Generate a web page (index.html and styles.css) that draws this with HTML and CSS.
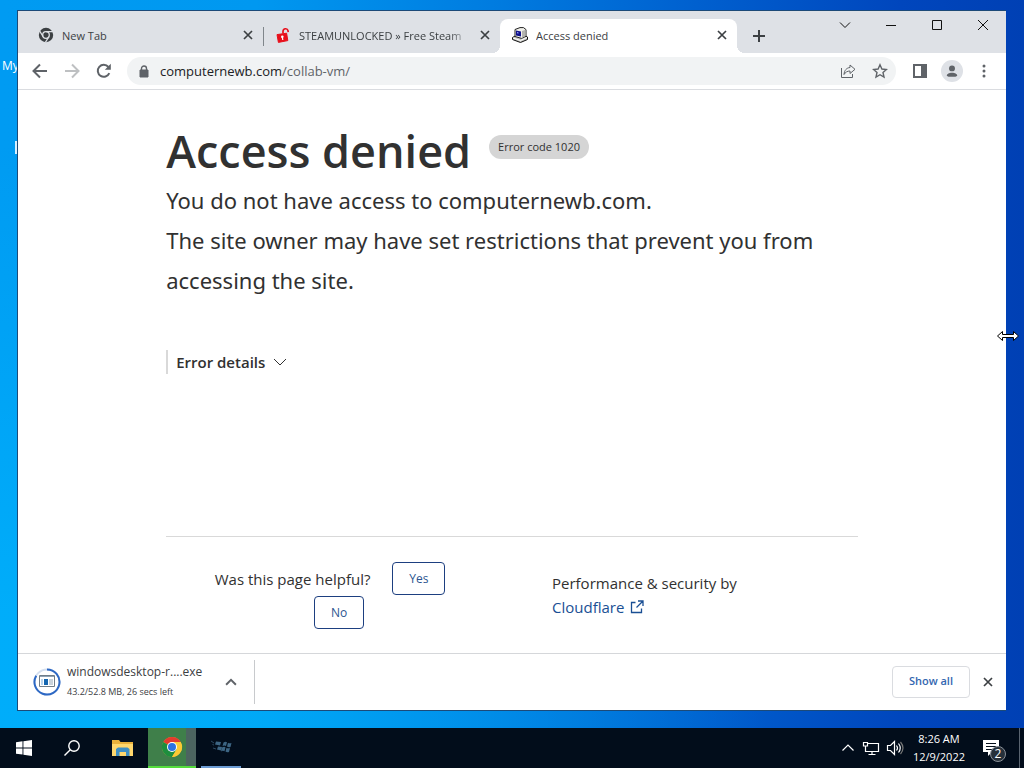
FILE: index.html
```html
<!DOCTYPE html>
<html lang="en">
<head>
    <meta charset="UTF-8">
    <meta name="viewport" content="width=device-width, initial-scale=1.0">
    <title>Access denied</title>
    <link rel="stylesheet" href="styles.css">
</head>
<body>
    <div class="desktop">
        <span class="shortcut">My</span>
        <span class="shortcut-edge"></span>

        <div class="window">
            <div class="tabstrip">
                <div class="tab">
                    <svg class="favicon" viewBox="0 0 16 16">
                        <circle cx="8" cy="8" r="7.2" fill="#3c4043"/>
                        <circle cx="8" cy="8" r="3.3" fill="none" stroke="#dee1e6" stroke-width="1.3"/>
                        <path d="M8 4.7h7M5.1 9.6L1.6 3.9M10.9 9.6L7.4 15.4" stroke="#dee1e6" stroke-width="1.2"/>
                    </svg>
                    <span class="title">New Tab</span>
                    <button class="close" aria-label="Close tab"><svg viewBox="0 0 10 10"><path d="M1 1l8 8M9 1L1 9"/></svg></button>
                </div>
                <div class="tab second">
                    <svg class="favicon" viewBox="0 0 16 16">
                        <path d="M2 7.6l9.6-1.4 1.2 7.4-9.4 1.8z" fill="#e8101c" stroke="#e8101c" stroke-linejoin="round"/>
                        <path d="M8 6.4V4.2C8.2 1.2 12.4.9 13 3.6l.2 1.6" fill="none" stroke="#e8101c" stroke-width="1.7"/>
                        <circle cx="7.3" cy="9.8" r="1.3" fill="#fff"/>
                        <path d="M7.3 10l.5 3" stroke="#fff" stroke-width="1.2"/>
                    </svg>
                    <span class="title fade">STEAMUNLOCKED » Free Steam</span>
                    <button class="close" aria-label="Close tab"><svg viewBox="0 0 10 10"><path d="M1 1l8 8M9 1L1 9"/></svg></button>
                </div>
                <div class="tab active">
                    <svg class="favicon" viewBox="0 0 16 16">
                        <path d="M.5 10.5L4 8.5l8-.5 3.5 2v2.5L8.5 15.500.5 12.500z" fill="#c8c8c4" stroke="#111"/>
                        <path d="M1 11l7.5 2.5 6.500-3" fill="none" stroke="#fff"/>
                        <path d="M3 2.500L8 .6h3.500l2.500 2v6.600L9.500 11.400 3 9.500z" fill="#f0f0ea" stroke="#222"/>
                        <path d="M10 4v7l3.500-2V2.800z" fill="#b4b4b0"/>
                        <path d="M4 3.500l5 1v5L4 8.500z" fill="#10108c"/>
                        <path d="M5 5l1.500.4v1.200L5 6.200z" fill="#9fa8ff"/>
                    </svg>
                    <span class="title">Access denied</span>
                    <button class="close" aria-label="Close tab"><svg viewBox="0 0 10 10"><path d="M1 1l8 8M9 1L1 9"/></svg></button>
                </div>
                <button class="newtab" aria-label="New tab"><svg viewBox="0 0 12 12"><path d="M6 0v12M0 6h12"/></svg></button>
                <div class="captions">
                    <button aria-label="Search tabs"><svg viewBox="0 0 12 12"><path d="M1 3.500l5 5 5-5"/></svg></button>
                    <button aria-label="Minimize"><svg viewBox="0 0 12 12"><path d="M1 6.500h10"/></svg></button>
                    <button aria-label="Maximize"><svg viewBox="0 0 12 12"><path d="M1.500 1.500h9v9h-9z"/></svg></button>
                    <button aria-label="Close"><svg viewBox="0 0 12 12"><path d="M1 1l10 10M11 1L1 11"/></svg></button>
                </div>
            </div>

            <div class="toolbar">
                <button aria-label="Back"><svg viewBox="0 0 16 16"><path d="M15 8H2M8 1.500L1.500 8 8 14.500"/></svg></button>
                <button class="off" aria-label="Forward"><svg viewBox="0 0 16 16"><path d="M1 8h13M8 1.500L14.500 8 8 14.500"/></svg></button>
                <button aria-label="Reload"><svg viewBox="0 0 16 16"><path d="M13.300 10.200A6 6 0 1 1 12.400 4"/><path d="M14.800.8v6H8.800z" fill="#5f6368" stroke="none"/></svg></button>
                <div class="omnibox">
                    <svg class="lock" viewBox="0 0 10 13"><path d="M1 5h8v7H1z" fill="#5f6368" stroke="#5f6368" stroke-linejoin="round"/><path d="M2.500 5V3.500a2.500 2.500 0 0 1 5 0V5" fill="none" stroke="#5f6368" stroke-width="1.400"/></svg>
                    <a class="url" href="#">computernewb.com<span>/collab-vm/</span></a>
                    <button aria-label="Share"><svg class="thin" viewBox="0 0 16 16"><path d="M1.500 5v9.500h11V11"/><path d="M10 2l5 4.300-5 4.200V8C7.500 8 5.500 9 4 11.500 4.300 7.500 6.500 4.800 10 4.500z"/></svg></button>
                    <button aria-label="Bookmark"><svg class="star" viewBox="0 0 16 16"><path d="M8 1.800l1.900 4.200 4.500.5-3.400 3 1 4.500L8 11.700 4 14l1-4.500-3.400-3 4.500-.5z"/></svg></button>
                </div>
                <button aria-label="Side panel"><svg viewBox="0 0 16 16"><path d="M2 2h12v12H2z"/><path d="M10 2h4v12h-4z" fill="#5f6368"/></svg></button>
                <button class="profile" aria-label="Profile"><svg viewBox="0 0 16 16"><circle cx="8" cy="5" r="3.400"/><path d="M1.500 14.500c0-6 13-6 13 0z"/></svg></button>
                <button aria-label="Menu"><svg class="dots" viewBox="0 0 16 16"><circle cx="8" cy="3" r="1.500"/><circle cx="8" cy="8" r="1.500"/><circle cx="8" cy="13" r="1.500"/></svg></button>
            </div>

            <main class="page">
                <header>
                    <h1>Access denied</h1>
                    <span class="code">Error code 1020</span>
                </header>
                <p class="lead">You do not have access to computernewb.com.</p>
                <p class="lead">The site owner may have set restrictions that prevent you from accessing the site.</p>
                <button class="details">Error details <svg viewBox="0 0 14 14"><path d="M1 4l6 6 6-6"/></svg></button>
                <footer>
                    <div class="helpful">
                        Was this page helpful?
                        <button>Yes</button>
                        <button>No</button>
                    </div>
                    <div class="security">
                        Performance &amp; security by<br>
                        <a href="#">Cloudflare <svg viewBox="0 0 14 14"><path d="M5.500 2.500H1.500v10h10V8.500M8 1h5v5M13 1L6.500 7.500"/></svg></a>
                    </div>
                </footer>
            </main>

            <div class="downloads">
                <div class="item">
                    <svg class="progress" viewBox="0 0 28 28">
                        <circle cx="14" cy="14" r="12.500" fill="none" stroke="#d5e0f0" stroke-width="2"/>
                        <path d="M14 1.500A12.500 12.500 0 1 1 3.200 7.700" fill="none" stroke="#2d68c4" stroke-width="2"/>
                        <path d="M6.500 7.500h15v11h-15z" fill="#fff" stroke="#6f7c88"/>
                        <path d="M7 8.500h14" stroke="#8ea2b5"/>
                        <path d="M8 11h2v6H8z" fill="#b8d4ee"/>
                        <path d="M11 11h4v6h-4z" fill="#1566b0"/>
                        <path d="M16 12h4M16 14h4M16 16h4" stroke="#93a6b8"/>
                    </svg>
                    <div>
                        <div class="file">windowsdesktop-r....exe</div>
                        <div class="size">43.2/52.8 MB, 26 secs left</div>
                    </div>
                    <button class="more" aria-label="More"><svg viewBox="0 0 10 10"><path d="M1.500 7L5 3.500 8.500 7"/></svg></button>
                </div>
                <button class="showall">Show all</button>
                <button class="close" aria-label="Close downloads"><svg viewBox="0 0 10 10"><path d="M1 1l8 8M9 1L1 9"/></svg></button>
            </div>
        </div>

        <svg class="cursor" viewBox="0 0 24 12"><path d="M1.500 6l5-4.500v3h11v-3l5 4.500-5 4.500v-3h-11v3z" fill="#fff" stroke="#000"/></svg>
    </div>

    <div class="taskbar">
        <button class="task" aria-label="Start"><svg viewBox="0 0 16 16" fill="#fff"><path d="M0 2.200l6.500-.9v6.200H0zM7.400 1.200L16 0v7.500H7.400zM0 8.400h6.500v6.200L0 13.700zM7.400 8.400H16V16l-8.600-1.200z"/></svg></button>
        <button class="task" aria-label="Search"><svg viewBox="0 0 16 16" fill="none" stroke="#fff" stroke-width="1.400"><circle cx="10" cy="6" r="5.200"/><path d="M6.300 9.700L.5 15.500"/></svg></button>
        <button class="task folder" aria-label="File Explorer">
            <svg class="big" viewBox="0 0 22 22">
                <path d="M0 3h7l1.500 2H21v14H0z" fill="#e9b13c"/>
                <path d="M0 7h21v12H0z" fill="#ffd76d"/>
                <path d="M4 19v-7l2-1.500h9.500l2 1.500v7H14v-4H7.500v4z" fill="#3f8fc4"/>
            </svg>
        </button>
        <button class="task chrome" aria-label="Chrome">
            <svg class="big" viewBox="0 0 22 22">
                <circle cx="11" cy="11" r="10" fill="#fcc934"/>
                <path d="M11 11L2.300 6A10 10 0 0 1 19.700 6z" fill="#e33b2e"/>
                <path d="M11 11L2.300 6A10 10 0 0 0 11 21l5-8z" fill="#1e8e3e"/>
                <path d="M11 6h8.700A10 10 0 0 1 11 21l4.500-7.500z" fill="#fcc934"/>
                <circle cx="11" cy="11" r="5" fill="#fff"/>
                <circle cx="11" cy="11" r="4" fill="#2d72e0"/>
            </svg>
        </button>
        <button class="task app" aria-label="Windows Update">
            <svg class="big" viewBox="0 0 22 22" fill="#3d6583">
                <path d="M6 5.500l5 .5-1 3.500-5-1zM8 10.500l4 .5-1 3.500-4-1zM13.500 6.500q2-1.500 3.500-.3L16 10q-2-1-3.500.3zM18 6.800q1.500 1 3.500.2L20.500 11q-2 .7-3.500-.5zM12 11.500q2-1.500 3.500-.3l-1 4q-2-1-3.500.3zM16.500 11.800q1.500 1 3.500.2l-1 4q-2 .7-3.500-.5z"/>
                <path d="M1 5l3 2M2.500 8.500l1.500.5M3 12l3 1" stroke="#2c4a62"/>
            </svg>
        </button>

        <div class="tray">
            <svg viewBox="0 0 16 16"><path d="M2.500 10.500L8 5l5.500 5.500"/></svg>
            <svg viewBox="0 0 18 16"><path d="M6 3.500h10.500v8H3.500V7M10 11.500v3M6.500 14.500h7M1.500 2.500h4v3.500h-4zM3.500 6v2"/></svg>
            <svg viewBox="0 0 18 16"><path d="M1.500 5.500h3l4-4v13l-4-4h-3zM10.500 5.500q2 2.500 0 5M12.500 3.500q3.500 4.500 0 9"/><path d="M14.500 2q5 6 0 12" stroke="#777"/></svg>
        </div>
        <div class="clock">8:26 AM<br>12/9/2022</div>
        <div class="notes">
            <svg viewBox="0 0 18 18"><path d="M1 1h16v12h-7l-4 4v-4H1z" fill="#fff"/><path d="M4 4.500h10M4 7.500h10M4 10.500h6" stroke="#06101c"/></svg>
            <span class="count">2</span>
        </div>
        <div class="peek"></div>
    </div>
</body>
</html>
```
FILE: styles.css
```css
*{
    box-sizing: border-box;
}
body{
    margin:0px;
    height:100vh;
    display:flex;
    flex-direction: column;
    overflow:hidden;
    font-family: "Segoe UI", "Open Sans", sans-serif;
    font-size:12px;
    color:#3c4043;
}
button{
    font-family: inherit;
    background:none;
    border:0;
    padding:0;
    color:inherit;
}
svg{
    display:block;
    flex:none;
}
.desktop{
    flex:1;
    min-height:0;
    display:flex;
    padding:10px 18px 17px 17px;
    position:relative;
    background:
        radial-gradient(ellipse 75% 80% at 0 100%, rgba(0, 185, 255, .6) 20%, rgba(0, 185, 255, 0)),
        linear-gradient(90deg, #009bf2 0%, #0098f0 25%, #007ce0 48%, #0060cf 68%, #0046bd 88%, #0040b4 100%);
}
.shortcut{
    position:absolute;
    left:2px;
    top:57px;
    color:#fff;
}
.shortcut-edge{
    position:absolute;
    left:15px;
    top:141px;
    width:2px;
    height:13px;
    background-color:#d8f0ff;
}
.window{
    flex:1;
    min-width:0;
    position:relative;
    display:flex;
    flex-direction: column;
    background-color:#fff;
    border:1px solid #1c4a78;
    border-right:0;
}

/* tabs */
.tabstrip{
    height:42px;
    display:flex;
    align-items: flex-end;
    padding-left:8px;
    background-color:#dee1e6;
}
.tab{
    flex:0 1 237px;
    min-width:0;
    height:34px;
    display:flex;
    align-items: center;
    padding:0 8px 2px 12px;
    position:relative;
}
.tab.second::before{
    content:"";
    position:absolute;
    left:0;
    top:8px;
    width:1px;
    height:19px;
    background-color:#80868b;
}
.tab.active{
    background-color:#fff;
    border-radius:8px 8px 0 0;
}
.tab.active::before,
.tab.active::after{
    content:"";
    position:absolute;
    bottom:0;
    width:8px;
    height:8px;
}
.tab.active::before{
    left:-8px;
    background:radial-gradient(circle at 0 0, transparent 8px, #fff 8px);
}
.tab.active::after{
    right:-8px;
    background:radial-gradient(circle at 100% 0, transparent 8px, #fff 8px);
}
.favicon{
    width:16px;
    height:16px;
    margin-right:8px;
}
.title{
    flex:1;
    overflow:hidden;
    white-space: nowrap;
    font-size:11px;
}
.fade{
    -webkit-mask-image:linear-gradient(90deg, #000 88%, transparent);
    mask-image:linear-gradient(90deg, #000 88%, transparent);
}
.close{
    width:14px;
    height:14px;
    margin-left:8px;
    display:grid;
    place-items: center;
}
.close svg{
    width:10px;
    height:10px;
    stroke:#3c4043;
    stroke-width:1.7;
}
.newtab{
    width:28px;
    height:34px;
    margin-left:8px;
    display:grid;
    place-items: center;
}
.newtab svg{
    width:12px;
    height:12px;
    stroke:#3c4043;
    stroke-width:2;
}
.captions{
    margin-left:auto;
    align-self: flex-start;
    display:flex;
}
.captions button{
    width:46px;
    height:28px;
    display:grid;
    place-items: center;
}
.captions svg{
    width:12px;
    height:12px;
    fill:none;
    stroke:#111;
}

/* toolbar */
.toolbar{
    height:37px;
    display:flex;
    align-items: center;
    padding:0 6px;
    border-bottom:1px solid #dadce0;
}
.toolbar button{
    width:32px;
    height:28px;
    display:grid;
    place-items: center;
}
.toolbar button svg{
    width:16px;
    height:16px;
    fill:none;
    stroke:#5f6368;
    stroke-width:2;
}
.toolbar button .thin{
    stroke-width:1;
}
.toolbar button .star{
    stroke-width:1.4;
}
.toolbar .off{
    opacity:.4;
}
.toolbar button .dots{
    fill:#5f6368;
    stroke:none;
}
.omnibox{
    flex:1;
    height:28px;
    margin:0 8px 0 7px;
    padding-left:12px;
    display:flex;
    align-items: center;
    border-radius:14px;
    background-color:#f1f3f4;
}
.lock{
    width:10px;
    height:13px;
}
.url{
    flex:1;
    margin-left:11px;
    font-size:13px;
    line-height:20px;
    color:#202124;
    text-decoration: none;
}
.url span{
    color:#5f6368;
}
.toolbar .profile svg{
    width:22px;
    height:22px;
    padding:4px;
    border-radius:50%;
    background-color:#dee1e6;
    fill:#5f6368;
    stroke:none;
}

/* error page */
.page{
    flex:1;
    min-height:0;
    padding:32px 15% 0;
    color:#313131;
}
header{
    display:flex;
    align-items: center;
}
h1{
    margin:0;
    font-size:45px;
    line-height:58px;
    font-weight:600;
}
.code{
    margin-left:18px;
    margin-bottom:8px;
    padding:0 9px;
    font-size:11px;
    line-height:24px;
    border-radius:12px;
    background-color:#d5d5d5;
}
.lead{
    margin:0;
    font-family: "Segoe UI", "Noto Sans", sans-serif;
    font-size:22px;
    line-height:40px;
}
.details{
    margin-top:50px;
    padding-left:8px;
    display:flex;
    align-items: center;
    gap:8px;
    border-left:2px solid #d9d9d9;
    font-size:15px;
    line-height:24px;
    font-weight:600;
}
.details svg{
    width:14px;
    height:14px;
    fill:none;
    stroke:#313131;
}
footer{
    margin-top:162px;
    padding-top:25px;
    display:grid;
    grid-template-columns: 1fr 1fr;
    border-top:1px solid #d9d9d9;
    font-size:15px;
}
.helpful{
    padding:0 48px 0 30px;
    text-align: center;
    line-height:34px;
}
.helpful button{
    margin-left:18px;
    padding:0 16px;
    font-size:12px;
    line-height:31px;
    vertical-align: top;
    color:#2c5590;
    border:1px solid #1d3f80;
    border-radius:4px;
}
.security{
    padding:9px 0 0 40px;
    line-height:24px;
}
.security a{
    color:#1a4f94;
    text-decoration: none;
}
.security svg{
    display:inline-block;
    width:14px;
    height:14px;
    margin-left:2px;
    vertical-align: -1px;
    fill:none;
    stroke:#1a4f94;
    stroke-width:1.3;
}

/* downloads */
.downloads{
    height:57px;
    display:flex;
    align-items: center;
    padding:0 11px 1px 15px;
    border-top:1px solid #d5d7da;
}
.item{
    height:44px;
    display:flex;
    align-items: center;
    border-right:1px solid #c8cacd;
    padding-right:16px;
}
.progress{
    width:28px;
    height:28px;
    margin-right:6px;
}
.file{
    line-height:20px;
}
.size{
    font-size:9px;
    line-height:20px;
}
.more{
    margin-left:22px;
}
.more svg{
    width:14px;
    height:14px;
    fill:none;
    stroke:#5f6368;
    stroke-width:1.4;
}
.showall{
    margin-left:auto;
    margin-right:3px;
    height:32px;
    padding:0 16px 2px;
    font-size:11px;
    font-weight:600;
    color:#3367b0;
    border:1px solid #dadce0;
    border-radius:4px;
}
.cursor{
    position:absolute;
    right:4px;
    top:330px;
    width:24px;
    height:12px;
}

/* taskbar */
.taskbar{
    height:40px;
    display:flex;
    align-items: center;
    background-color:#020d1b;
    color:#fff;
}
.task{
    width:48px;
    height:40px;
    display:grid;
    place-items: center;
}
.task svg{
    width:16px;
    height:16px;
}
.task .big{
    width:22px;
    height:22px;
}
.folder{
    width:52px;
    padding-left:2px;
}
.chrome{
    border-bottom:2px solid #54dc3c;
    background:linear-gradient(90deg, #3f7f4a 38px, #4c6460 38px);
}
.app{
    width:40px;
    margin-left:5px;
    border-bottom:2px solid #6c9cd4;
}
.tray{
    margin-left:auto;
    display:flex;
    align-items: center;
    gap:6px;
}
.tray svg{
    height:16px;
    fill:none;
    stroke:#fff;
    stroke-width:1.2;
}
.clock{
    margin-left:9px;
    font-size:11px;
    text-align: center;
    line-height:18px;
}
.notes{
    margin-left:17px;
    position:relative;
}
.notes svg{
    width:18px;
    height:18px;
}
.count{
    position:absolute;
    left:8px;
    top:7px;
    width:16px;
    height:16px;
    line-height:14px;
    text-align: center;
    border:1px solid #8a9098;
    border-radius:50%;
    background-color:#26303a;
}
.peek{
    width:5px;
    height:40px;
    margin-left:19px;
    border-left:1px solid #5a6470;
}
```
